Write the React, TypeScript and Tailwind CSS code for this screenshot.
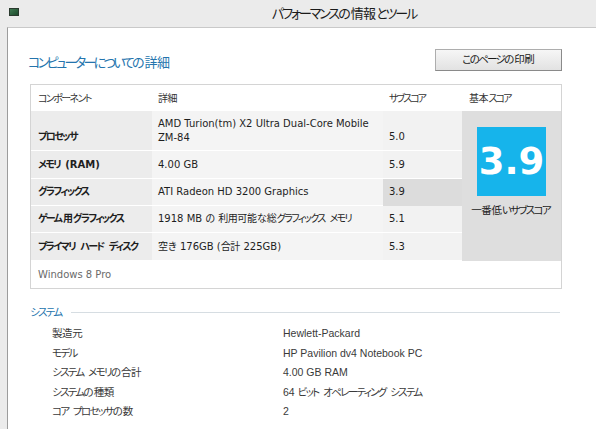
import React from "react";

const JP = "[font-family:'DejaVu_Sans','Noto_Sans_CJK_JP',sans-serif] [font-feature-settings:'palt']";
const JP2 = "[font-family:'Liberation_Sans','Noto_Sans_CJK_JP',sans-serif] [font-feature-settings:'palt']";

function J({ t, tight }: { t: string; tight?: boolean }) {
  const parts = t.split(/([\u3040-\u30ff]+|[\u4e00-\u9fff]+)/);
  return (
    <span>
      {parts.map((p, i) => {
        if (!p) return null;
        if (/^[\u3040-\u30ff]/.test(p)) {
          return (
            <span key={i} className={tight ? "tracking-[-0.2em] mr-[0.2em]" : "tracking-[-0.16em] mr-[0.16em]"}>
              {p}
            </span>
          );
        }
        if (/^[\u4e00-\u9fff]/.test(p)) {
          return (
            <span key={i} className="tracking-[-0.04em] mr-[0.04em]">
              {p}
            </span>
          );
        }
        return <span key={i}>{p}</span>;
      })}
    </span>
  );
}

const rows = [
  { name: "プロセッサ", detail: ["AMD Turion(tm) X2 Ultra Dual-Core Mobile", "ZM-84"], score: "5.0", h: "h-[40px]" },
  { name: "メモリ (RAM)", detail: ["4.00 GB"], score: "5.9", h: "h-[28px]" },
  { name: "グラフィックス", detail: ["ATI Radeon HD 3200 Graphics"], score: "3.9", h: "h-[27px]", low: true },
  { name: "ゲーム用グラフィックス", detail: ["1918 MB の 利用可能な総グラフィックス メモリ"], score: "5.1", h: "h-[27px]" },
  { name: "プライマリ ハード ディスク", detail: ["空き 176GB (合計 225GB)"], score: "5.3", h: "h-[28px]" },
];

const sys = [
  ["製造元", "Hewlett-Packard"],
  ["モデル", "HP Pavilion dv4 Notebook PC"],
  ["システム メモリの合計", "4.00 GB RAM"],
  ["システムの種類", "64 ビット オペレーティング システム"],
  ["コア プロセッサの数", "2"],
];

export default function App() {
  return (
    <div className="w-[596px] h-[429px] overflow-hidden bg-[#ebebeb] flex flex-col">
      <div className="h-[27px] shrink-0 relative flex items-center">
        <div className="absolute left-[9px] top-[8px] w-[10px] h-[8px] bg-gradient-to-br from-[#3f7a52] to-[#1d4a2c] border border-[#2a3a2e]" />
        <div className={`pl-[272px] text-[13px] text-[#1a1a1a] leading-[16px] ${JP}`}>
          <J t="パフォーマンスの情報とツール" />
        </div>
      </div>
      <div className="flex-1 flex min-h-0">
        <div className="w-[7px] shrink-0" />
        <div className="flex-1 bg-white border-l border-t border-l-[#9c9c9c] border-t-[#c9c9c9] flex flex-col">
          <div className="flex items-start pl-[20px] pr-[34px] mt-[21px]">
            <div className={`flex-1 pt-[4px] text-[13px] text-[#2474ad] leading-[20px] ${JP}`}>
              <J t="コンピューターについての詳細" tight />
            </div>
            <button className={`w-[127px] h-[22px] flex items-center justify-center bg-gradient-to-b from-[#f6f6f6] to-[#e2e2e2] border border-[#adadad] border-r-[#8a8a8a] border-b-[#8a8a8a] text-[10.5px] text-[#1a1a1a] ${JP2}`}>
              <J t="このページの印刷" />
            </button>
          </div>

          <div className={`ml-[22px] mt-[11px] w-[532px] border border-[#d4d4d4] text-[10px] text-[#1e1e1e] ${JP}`}>
            <div className="grid grid-cols-[121px_231px_79px_99px]">
              <div className="h-[26px] flex items-center pl-[7px] text-[#333]"><J t="コンポーネント" /></div>
              <div className="h-[26px] flex items-center pl-[6px] text-[#333]"><J t="詳細" /></div>
              <div className="h-[26px] flex items-center pl-[6px] text-[#333]"><J t="サブスコア" tight /></div>
              <div className="h-[26px] flex items-center pl-[7px] text-[#333]"><J t="基本スコア" tight /></div>

              {rows.map((r, i) => (
                <React.Fragment key={r.name}>
                  <div className={`${r.h} bg-[#ececec] border-b border-white flex ${i === 0 ? "items-end pb-[6px]" : "items-center"} pl-[7px] font-bold leading-[14px] whitespace-nowrap`}>
                    <J t={r.name} />
                  </div>
                  <div className={`${r.h} bg-[#f4f4f4] border-b border-white flex flex-col justify-center pl-[6px] leading-[14px] whitespace-nowrap`}>
                    {r.detail.map((d) => (
                      <div key={d}><J t={d} /></div>
                    ))}
                  </div>
                  <div className={`${r.h} ${r.low ? "bg-[#dcdcdc] border-[#dcdcdc]" : "bg-[#f2f2f2] border-white"} border-b flex ${i === 0 ? "items-end pb-[6px]" : "items-center"} pl-[6px] leading-[14px]`}>
                    {r.score}
                  </div>
                  {i === 0 && (
                    <div className="row-span-5 bg-[#dedede] flex flex-col items-center pt-[16px]">
                      <div className="w-[69px] h-[69px] bg-[#16b4eb] flex items-center justify-center">
                        <span className="text-white font-bold text-[37px] leading-none [font-family:'DejaVu_Sans',sans-serif] pb-[1px]">3.9</span>
                      </div>
                      <div className="mt-[7px] leading-[14px] text-[10.5px] text-[#222] whitespace-nowrap">
                        <J t="一番低いサブスコア" />
                      </div>
                    </div>
                  )}
                </React.Fragment>
              ))}

              <div className="col-span-4 h-[27px] flex items-center pl-[7px] text-[#6a6a6a]">Windows 8 Pro</div>
            </div>
          </div>

          <div className={`ml-[22px] mr-[36px] mt-[16px] flex items-center gap-[8px] ${JP2}`}>
            <span className="text-[10.5px] leading-[14px] text-[#2474ad]"><J t="システム" /></span>
            <div className="flex-1 h-px bg-[#d6dde2]" />
          </div>
          <div className={`mt-[5px] pl-[44px] text-[10.5px] text-[#3a3a3a] ${JP2}`}>
            {sys.map(([k, v]) => (
              <div key={k} className="flex h-[19.6px] items-center whitespace-nowrap">
                <div className="w-[231px]"><J t={k} /></div>
                <div><J t={v} /></div>
              </div>
            ))}
          </div>
        </div>
      </div>
    </div>
  );
}
